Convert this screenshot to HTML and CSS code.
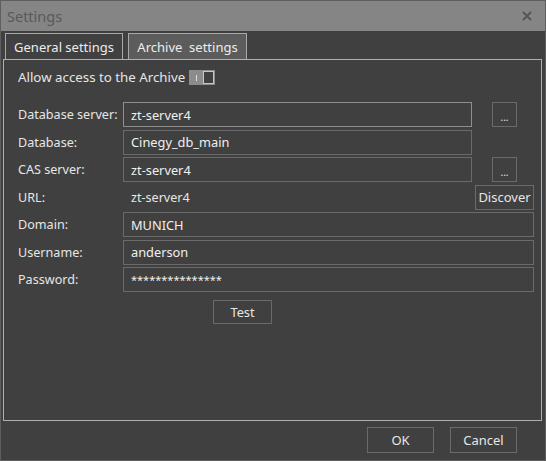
FILE: index.html
```html
<!DOCTYPE html>
<html lang="en">
<head>
  <meta charset="UTF-8">
  <title>Settings</title>
  <link rel="stylesheet" href="styles.css">
</head>
<body>
  <div class="window">
    <div class="titlebar">
      <span class="title">Settings</span>
      <svg class="close" width="10" height="10" viewBox="0 0 10 10">
        <path d="M1 1 L9 9 M9 1 L1 9" stroke="#555" stroke-width="2"/>
      </svg>
    </div>

    <div class="tabs">
      <div class="tab tab-general">General settings</div>
      <div class="tab tab-archive active">Archive&nbsp; settings</div>
    </div>

    <div class="panel">
      <div class="allow-row">
        <span>Allow access to the Archive</span>
        <span class="toggle"><span class="tick"></span><span class="knob"></span></span>
      </div>

      <div class="form">
        <div class="row">
          <label>Database server:</label>
          <input class="field short focused" type="text" value="zt-server4">
          <button class="dots">...</button>
        </div>
        <div class="row">
          <label>Database:</label>
          <input class="field short" type="text" value="Cinegy_db_main">
        </div>
        <div class="row">
          <label>CAS server:</label>
          <input class="field short" type="text" value="zt-server4">
          <button class="dots">...</button>
        </div>
        <div class="row">
          <label>URL:</label>
          <span class="url">zt-server4</span>
          <button class="discover">Discover</button>
        </div>
        <div class="row">
          <label>Domain:</label>
          <input class="field" type="text" value="MUNICH">
        </div>
        <div class="row">
          <label>Username:</label>
          <input class="field" type="text" value="anderson">
        </div>
        <div class="row">
          <label>Password:</label>
          <input class="field password" type="text" value="***************">
        </div>
      </div>

      <button class="test">Test</button>
    </div>

    <div class="footer">
      <button class="btn">OK</button>
      <button class="btn">Cancel</button>
    </div>
  </div>
</body>
</html>
```

FILE: styles.css
```css
body {
  margin: 0;
  padding: 0;
  background-color: #404040;
  font-family: "Noto Sans", "Open Sans", sans-serif;
  font-size: 12.6px;
  color: #e6e6e6;
}
.window {
  width: 546px;
  height: 461px;
  box-sizing: border-box;
  border: 1px solid #5e5e5e;
  display: flex;
  flex-direction: column;
}
.titlebar {
  height: 30px;
  background-color: #858585;
  display: flex;
  align-items: center;
  justify-content: space-between;
  padding: 0 13px 0 6px;
}
.title {
  color: #595959;
  font-size: 14.5px;
}
.tabs {
  display: flex;
  padding: 2px 0 0 4px;
  height: 26px;
}
.tab {
  box-sizing: border-box;
  height: 26px;
  border: 1px solid #a8a8a8;
  border-bottom: none;
  display: flex;
  align-items: center;
  justify-content: center;
  font-size: 13px;
  color: #ececec;
}
.tab-general {
  width: 118px;
}
.tab-archive {
  width: 119px;
  margin-left: 5px;
  background-color: #5c5c5c;
}
.panel {
  box-sizing: border-box;
  height: 362px;
  margin: 0 3px 0 2px;
  border: 1px solid #b0b0b0;
  padding: 9px 7px 0 14px;
}
.allow-row {
  display: flex;
  align-items: center;
  height: 16px;
  font-size: 13.3px;
}
.toggle {
  position: relative;
  display: inline-block;
  width: 26px;
  height: 15px;
  margin-left: 4px;
  background-color: #8c8c8c;
}
.toggle .tick {
  position: absolute;
  left: 7px;
  top: 5px;
  width: 1px;
  height: 6px;
  background-color: #dedede;
}
.toggle .knob {
  position: absolute;
  right: 1px;
  top: 1px;
  width: 9px;
  height: 11px;
  border: 1px solid #c8c8c8;
  background-color: #404040;
}
.form {
  display: flex;
  flex-direction: column;
  gap: 2.5px;
  margin-top: 17px;
}
.row {
  display: flex;
  align-items: center;
  height: 25px;
}
.row label {
  width: 105px;
  flex: none;
  white-space: nowrap;
}
.field {
  box-sizing: border-box;
  height: 25px;
  flex: 1;
  min-width: 0;
  border: 1px solid #6a6a6a;
  background: transparent;
  color: #f0f0f0;
  font-family: inherit;
  font-size: 12.8px;
  padding: 0 7px;
  outline: none;
}
.field.short {
  flex: none;
  width: 349px;
}
.field.focused {
  border-color: #8e8e8e;
}
.field.password {
  font-size: 11px;
}
button {
  box-sizing: border-box;
  background: transparent;
  border: 1px solid #6a6a6a;
  color: #e6e6e6;
  font-family: inherit;
  font-size: 12.8px;
  padding: 0;
  cursor: pointer;
}
.dots {
  width: 25px;
  height: 25px;
  margin-left: 20px;
  font-size: 10px;
  padding-top: 4px;
}
.url {
  flex: 1;
  padding-left: 8px;
}
.discover {
  width: 59px;
  height: 25px;
  font-size: 13px;
}
.test {
  display: block;
  width: 59px;
  height: 24px;
  margin: 8px 0 0 195px;
}
.footer {
  display: flex;
  justify-content: flex-end;
  gap: 16px;
  padding: 6px 28px 0 0;
}
.btn {
  width: 67px;
  height: 26px;
  font-size: 13px;
}
```
